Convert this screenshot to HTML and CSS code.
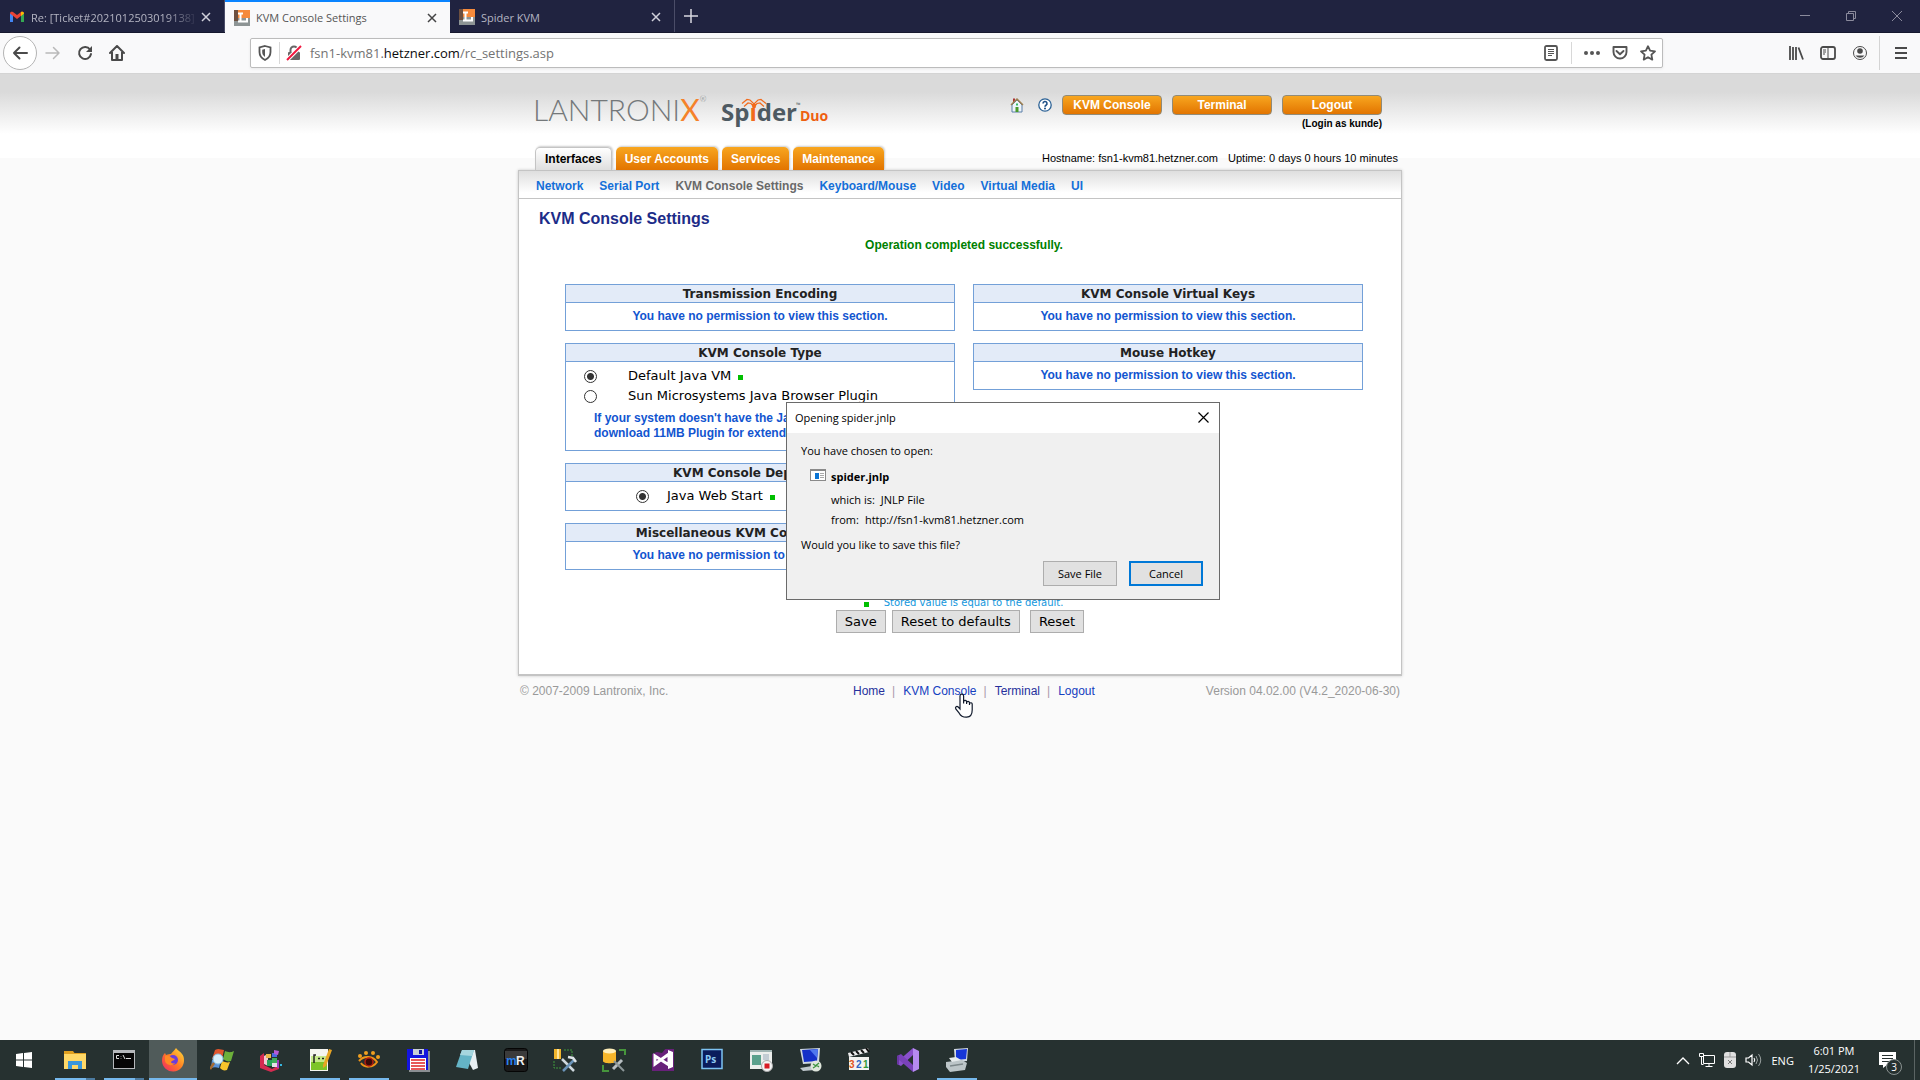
FILE: index.html
```html
<!DOCTYPE html>
<html lang="en">
<head>
<meta charset="utf-8">
<title>KVM Console Settings</title>
<link rel="stylesheet" href="styles.css">
</head>
<body>
<header class="browser">
  <div class="tabstrip">
    <div class="btab">
      <svg class="fav" viewBox="0 0 16 16"><path d="M1 13V4l3 2v7z" fill="#4285f4"/><path d="M12 13V6l3-2v9z" fill="#34a853"/><path d="M1 4.500C1 2.500 3 2.300 4 3l4 3 4-3c1-.7 3-.5 3 1.500L8 10z" fill="#ea4335"/><path d="M12 3c1-.7 3-.5 3 1.500L12 7z" fill="#fbbc04"/></svg>
      <span class="btab-title fade">Re: [Ticket#2021012503019138]</span>
      <button class="icon-btn" aria-label="Close tab"><svg width="10" height="10" viewBox="0 0 10 10"><path d="M1 1l8 8M9 1L1 9" stroke="#d0d0da" stroke-width="1.500"/></svg></button>
    </div>
    <div class="btab active">
      <svg class="fav" viewBox="0 0 16 16"><path d="M0 0h16v8H0z" fill="#f58a3c"/><path d="M0 8h16v8H0z" fill="#8d9494"/><path d="M0 0h4v11H0z" fill="#6d5040"/><path d="M4 3.500h5M6.500 3v8.500M4 11.500h9V8" fill="none" stroke="#fff" stroke-width="2"/></svg>
      <span class="btab-title">KVM Console Settings</span>
      <button class="icon-btn" aria-label="Close tab"><svg width="10" height="10" viewBox="0 0 10 10"><path d="M1 1l8 8M9 1L1 9" stroke="#444" stroke-width="1.500"/></svg></button>
    </div>
    <div class="btab">
      <svg class="fav" viewBox="0 0 16 16"><path d="M0 0h16v8H0z" fill="#f58a3c"/><path d="M0 8h16v8H0z" fill="#8d9494"/><path d="M0 0h4v11H0z" fill="#6d5040"/><path d="M4 3.500h5M6.500 3v8.500M4 11.500h9V8" fill="none" stroke="#fff" stroke-width="2"/></svg>
      <span class="btab-title">Spider KVM</span>
      <button class="icon-btn" aria-label="Close tab"><svg width="10" height="10" viewBox="0 0 10 10"><path d="M1 1l8 8M9 1L1 9" stroke="#d0d0da" stroke-width="1.500"/></svg></button>
    </div>
    <button class="icon-btn new-tab" aria-label="New tab"><svg width="14" height="14" viewBox="0 0 14 14"><path d="M7 0v14M0 7h14" stroke="#d8d8e0" stroke-width="1.500"/></svg></button>
    <div class="win-controls">
      <button class="icon-btn" aria-label="Minimize"><svg width="10" height="10" viewBox="0 0 10 10"><path d="M0 4.500h10" stroke="#8b8b9d"/></svg></button>
      <button class="icon-btn" aria-label="Restore"><svg width="10" height="10" viewBox="0 0 10 10"><path d="M.5 2.500h7v7h-7zM2.500 2.500v-2h7v7h-2" fill="none" stroke="#8b8b9d"/></svg></button>
      <button class="icon-btn" aria-label="Close"><svg width="10" height="10" viewBox="0 0 10 10"><path d="M0 0l10 10M10 0L0 10" stroke="#8b8b9d"/></svg></button>
    </div>
  </div>
  <div class="toolbar">
    <div class="nav-buttons">
      <button class="icon-btn back" aria-label="Back"><svg width="16" height="16" viewBox="0 0 16 16"><path d="M15 8H2M7.500 2.500L2 8l5.500 5.500" fill="none" stroke="#4a4a4a" stroke-width="2" stroke-linecap="round" stroke-linejoin="round"/></svg></button>
      <button class="icon-btn" aria-label="Forward"><svg width="16" height="16" viewBox="0 0 16 16"><path d="M1 8h13M8.500 2.500L14 8l-5.500 5.500" fill="none" stroke="#b9b9b9" stroke-width="1.500" stroke-linecap="round" stroke-linejoin="round"/></svg></button>
      <button class="icon-btn" aria-label="Reload"><svg width="16" height="16" viewBox="0 0 16 16"><path d="M13 4.500A6 6 0 1 0 14 9" fill="none" stroke="#4a4a4a" stroke-width="2" stroke-linecap="round"/><path d="M15 1v6H9z" fill="#4a4a4a"/></svg></button>
      <button class="icon-btn" aria-label="Home"><svg width="16" height="16" viewBox="0 0 16 16"><path d="M1 8l7-7 7 7M3 7v8h10V7" fill="none" stroke="#4a4a4a" stroke-width="2" stroke-linecap="round" stroke-linejoin="round"/><path d="M6.500 9h3v6h-3z" fill="#4a4a4a"/></svg></button>
    </div>
    <div class="urlbar">
      <svg width="14" height="16" viewBox="0 0 14 16"><path d="M7 1l5.500 1.500V7c0 4-2.500 6.500-5.500 8-3-1.500-5.500-4-5.500-8V2.500z" fill="none" stroke="#555" stroke-width="1.800"/><path d="M7 4v8C5 10.500 4.200 9 4.200 7V4.700z" fill="#555"/></svg>
      <span class="url-sep"></span>
      <svg width="16" height="16" viewBox="0 0 16 16"><path d="M4.500 8V5a3.500 3.500 0 0 1 7 0v3" fill="none" stroke="#666" stroke-width="2"/><rect x="2" y="7" width="12" height="8" rx="1" fill="#666"/><path d="M2 14L14 2" stroke="#fff" stroke-width="4"/><path d="M1 15L15 1" stroke="#f0173f" stroke-width="2"/></svg>
      <p class="url">fsn1-kvm81.<b>hetzner.com</b>/rc_settings.asp</p>
      <svg class="reader" width="16" height="16" viewBox="0 0 16 16"><rect x="2" y="1" width="12" height="14" rx="1.500" fill="none" stroke="#555" stroke-width="1.800"/><path d="M5 4.500h6M5 6.500h6M5 8.500h6M5 10.500h4" stroke="#555"/></svg>
      <span class="url-sep wide"></span>
      <div class="url-actions">
      <svg width="16" height="16" viewBox="0 0 16 16" fill="#555"><circle cx="2" cy="8" r="2"/><circle cx="8" cy="8" r="2"/><circle cx="14" cy="8" r="2"/></svg>
      <svg width="16" height="16" viewBox="0 0 16 16"><path d="M1.500 2h13v5a6.500 6.500 0 0 1-13 0zM4.500 6L8 9.300 11.500 6" fill="none" stroke="#555" stroke-width="1.900" stroke-linecap="round" stroke-linejoin="round"/></svg>
      <svg width="16" height="16" viewBox="0 0 16 16"><path d="M8 1.200l2.100 4.500 4.900.6-3.600 3.400.9 4.900L8 12.200l-4.300 2.400.9-4.900L1 6.300l4.900-.6z" fill="none" stroke="#555" stroke-width="1.800" stroke-linejoin="round"/></svg>
      </div>
    </div>
    <div class="tool-right">
      <svg width="16" height="16" viewBox="0 0 16 16"><path d="M2 1v14M5 2v13M8 2v13M10.500 2.500L15 14.500" stroke="#4a4a4a" stroke-width="1.800"/></svg>
      <svg width="16" height="16" viewBox="0 0 16 16"><rect x="1" y="2" width="14" height="12" rx="2" fill="none" stroke="#4a4a4a" stroke-width="1.800"/><path d="M8 2v12M3 5h3M3 7h3M3 9h2" stroke="#4a4a4a"/></svg>
      <svg width="16" height="16" viewBox="0 0 16 16"><circle cx="8" cy="8" r="6.500" fill="none" stroke="#4a4a4a"/><circle cx="8" cy="6" r="2.800" fill="#4a4a4a"/><path d="M3.500 10.500h9A5.500 5.500 0 0 1 3.500 10.500z" fill="#4a4a4a"/></svg>
    </div>
    <button class="icon-btn menu-btn" aria-label="Menu"><svg width="12" height="12" viewBox="0 0 12 12"><path d="M0 1h12M0 6h12M0 11h12" stroke="#4a4a4a" stroke-width="2"/></svg></button>
  </div>
</header>

<main class="page">
  <div class="wrap">
    <div class="banner">
      <div class="brand">
        <span class="lantronix">LANTRONI<b>X</b><sup>®</sup></span>
        <span class="spider"><span class="sp">Sp<i>ı</i>der</span><em>Duo</em><sup>™</sup>
          <svg class="legs" width="26" height="10" viewBox="0 0 26 10"><path d="M1 5.500L6 1.500l3 .5 4 4 4-4 3-.5 5 4M3 8.500l4-3.500 3 .5 3 3 3-3 3-.5 4 3.500" fill="none" stroke="#f26a1b" stroke-width="1.200"/><path d="M10.500 6h5l-1 4h-3z" fill="#f26a1b"/></svg></span>
      </div>
      <div class="account">
        <div class="quick">
          <a href="#" aria-label="Home"><svg width="14" height="16" viewBox="0 0 14 16"><path d="M3 1.500h2v4H3z" fill="#a33"/><path d="M2 8l5-5 5 5v7H2z" fill="#eef4fa" stroke="#5a7ea8"/><path d="M1 8l6-6 6 6" fill="none" stroke="#a08050" stroke-width="1.500"/><path d="M5.500 10h3v5h-3z" fill="#4b9a2c"/><path d="M6 6.500h2v2H6z" fill="#3b6"/></svg></a>
          <a href="#" aria-label="Help"><svg width="14" height="14" viewBox="0 0 14 14"><circle cx="7" cy="7" r="6.200" fill="#fff" stroke="#2c6296" stroke-width="1.300"/><path d="M5 5.500a2 2 0 1 1 3 1.700c-.8.500-1 .8-1 1.600" fill="none" stroke="#1d4f86" stroke-width="1.600"/><circle cx="7" cy="10.500" r="1" fill="#1d4f86"/></svg></a>
          <button class="orange">KVM Console</button>
          <button class="orange">Terminal</button>
          <button class="orange">Logout</button>
        </div>
        <p class="login">(Login as kunde)</p>
      </div>
    </div>
    <div class="tabrow">
      <nav class="tabs">
        <a href="#" class="current">Interfaces</a><a href="#">User Accounts</a><a href="#">Services</a><a href="#">Maintenance</a>
      </nav>
      <p class="host"><span>Hostname: fsn1-kvm81.hetzner.com</span><span>Uptime: 0 days 0 hours 10 minutes</span></p>
    </div>
    <div class="panel">
      <nav class="subnav">
        <a href="#">Network</a><a href="#">Serial Port</a><a href="#" class="current">KVM Console Settings</a><a href="#">Keyboard/Mouse</a><a href="#">Video</a><a href="#">Virtual Media</a><a href="#">UI</a>
      </nav>
      <h1>KVM Console Settings</h1>
      <p class="success">Operation completed successfully.</p>
      <div class="cols">
        <div class="col">
          <section class="box"><h2>Transmission Encoding</h2><p class="denied">You have no permission to view this section.</p></section>
          <section class="box"><h2>KVM Console Type</h2>
            <div class="types">
              <div class="opt"><input type="radio" name="type" id="vm" checked><label for="vm">Default Java VM</label><i class="dot"></i></div>
              <div class="opt"><input type="radio" name="type" id="sun"><label for="sun">Sun Microsystems Java Browser Plugin</label></div>
              <p class="hint">If your system doesn't have the Java plugin,<br>download 11MB Plugin for extended features.</p>
            </div>
          </section>
          <section class="box"><h2>KVM Console Deployment</h2>
            <div class="opt deploy"><input type="radio" name="deploy" id="jws" checked><label for="jws">Java Web Start</label><i class="dot"></i></div>
          </section>
          <section class="box"><h2>Miscellaneous KVM Console Settings</h2><p class="denied">You have no permission to view this section.</p></section>
        </div>
        <div class="col">
          <section class="box"><h2>KVM Console Virtual Keys</h2><p class="denied">You have no permission to view this section.</p></section>
          <section class="box"><h2>Mouse Hotkey</h2><p class="denied">You have no permission to view this section.</p></section>
        </div>
      </div>
      <p class="stored"><i class="dot"></i>Stored value is equal to the default.</p>
      <div class="actions">
        <button class="grey">Save</button>
        <button class="grey">Reset to defaults</button>
        <button class="grey last">Reset</button>
      </div>
    </div>
    <footer class="foot">
      <span>© 2007-2009 Lantronix, Inc.</span>
      <nav><a href="#">Home</a><span>|</span><a href="#" class="hover">KVM Console<svg class="cursor" width="20" height="26" viewBox="0 0 20 26"><path d="M6 16V3a1.800 1.800 0 0 1 3.600 0v7.500V8.500a1.600 1.600 0 0 1 3 0v2.500V9.500a1.500 1.500 0 0 1 2.900 0v2.500V10.800a1.400 1.400 0 0 1 2.700 0V17c0 4-1.500 7-5.500 7.200-4 .2-6-1.200-7.500-4L1.800 16c-1-2 1-3.400 2.400-2z" fill="#fff" stroke="#111a2c" stroke-width="1.200"/></svg></a><span>|</span><a href="#">Terminal</a><span>|</span><a href="#" class="hover">Logout</a></nav>
      <span class="version">Version 04.02.00 (V4.2_2020-06-30)</span>
    </footer>
  </div>

  <div class="dialog" role="dialog" aria-label="Opening spider.jnlp">
    <div class="dlg-title"><span>Opening spider.jnlp</span>
      <button class="icon-btn" aria-label="Close"><svg width="11" height="11" viewBox="0 0 11 11"><path d="M.5.5l10 10M10.500.5l-10 10" stroke="#000" stroke-width="1.200"/></svg></button></div>
    <div class="dlg-body">
      <p>You have chosen to open:</p>
      <div class="file">
        <svg width="16" height="12" viewBox="0 0 16 12"><rect x=".5" y=".5" width="15" height="11" fill="#fff" stroke="#8a8a8a"/><path d="M0 0h16v2H0z" fill="#8a8a8a"/><path d="M5 4h4v6H5z" fill="#0a74d4"/><path d="M10 4.500h4M10 6.500h4M10 8.500h4" stroke="#aaa"/></svg>
        <div>
          <strong>spider.jnlp</strong>
          <p><span>which is:</span><span>JNLP File</span></p>
          <p><span>from:</span><span>http://fsn1-kvm81.hetzner.com</span></p>
        </div>
      </div>
      <p>Would you like to save this file?</p>
      <div class="dlg-actions"><button>Save File</button><button class="default">Cancel</button></div>
    </div>
  </div>
</main>

<footer class="taskbar">
  <div class="apps">
    <button class="app start" aria-label="Start"><svg width="16" height="16" viewBox="0 0 16 16" fill="#fff"><path d="M0 2l7-1v6.500H0zM8 .9L16 0v7.500H8zM0 8.500h7V15l-7-1zM8 8.500h8V16l-8-1z"/></svg></button>
    <button class="app open multi" aria-label="File Explorer"><svg viewBox="0 0 24 24"><path d="M1 3h9l1.500 2H23v16H1z" fill="#e0a020"/><path d="M1 6h22v15H1z" fill="#ffd867"/><path d="M5 21v-8h14v8h-4v-4H9v4z" fill="#3a97dc"/></svg></button>
    <button class="app open multi" aria-label="Command Prompt"><svg viewBox="0 0 24 24"><path d="M1 2h22v19H1z" fill="#b5b8bb"/><path d="M2 5h20v15H2z" fill="#060606"/><path d="M7 7.500H4.500v3H7M9 8v.5M9 10v.5M11 7l2 4M14 10.500h5" stroke="#ddd" fill="none"/></svg></button>
    <button class="app open current" aria-label="Firefox"><svg viewBox="0 0 24 24"><defs><linearGradient id="ff" x1="0" y1="1" x2="1" y2="0"><stop offset="0" stop-color="#f0226c"/><stop offset=".5" stop-color="#ff7a22"/><stop offset="1" stop-color="#ffe43c"/></linearGradient></defs><path d="M15 0c1 2 5 4 6 6 1 1 2 3 2 6a11 11 0 0 1-22 1c0-4 1-6 3-8l1 2c2-1 4-1 5-1 1-2 3-3 5-6z" fill="url(#ff)"/><circle cx="12" cy="12" r="5" fill="#6b3ddb"/><path d="M4 8c3-1 5 0 7 2l3 1c-1 2-3 1-4 3 0 1 2 2 4 1-3 4-9 2-10-2z" fill="#ff8a24"/></svg></button>
    <button class="app" aria-label="Search tool"><svg viewBox="0 0 24 24"><path d="M5 2c4-2 6 0 9 0l-2 9c-4-2-6-1-10 0z" fill="#e0562e"/><path d="M15 3c3 1 5 2 9 0l-3 10c-3 1-5 0-8-2z" fill="#6cb03a"/><path d="M2 12c4-1 6-1 9 0l-2 8c-3-1-5-1-8 0z" fill="#5a93d8"/><path d="M12 13c3 1 5 2 8 1l-3 8c-3 1-5 0-7-2z" fill="#f6c52c"/><circle cx="8" cy="11" r="5" fill="#d8f0fb" stroke="#8cc4e4"/><path d="M4 15l-4 6" stroke="#a66c32" stroke-width="2.500"/></svg></button>
    <button class="app" aria-label="Defragmenter"><svg viewBox="0 0 24 24"><path d="M1 8l4-3v12l8 4 7-4v4l-8 3-11-4z" fill="#d42b50"/><path d="M5 8l4-2v12l-4-2z" fill="#f4c9d2"/><path d="M7 6h5v4H7z" fill="#e8b84a"/><path d="M8 12h5v6H8z" fill="#28a35a"/><path d="M13 10h5v5h-5z" fill="#3fae5c"/><path d="M13 5h5v4h-5z" fill="#4a6ae0"/><path d="M15 2l5 1-1 4-4-1z" fill="#b65ad6"/><path d="M18 12h2v8h-2z" fill="#a03fc0"/><path d="M13 15h5v4h-5z" fill="#e7dfe8"/><path d="M21 16h2v2h-2z" fill="#35b6e0"/></svg></button>
    <button class="app open" aria-label="Notepad++"><svg viewBox="0 0 24 24"><path d="M2 1h18v22H2z" fill="#f5f5f0"/><path d="M3 8h16v14H3z" fill="#c6ea8a"/><path d="M3 14h16v8H3z" fill="#7cc428"/><path d="M6 15V7h2M10 10.500h2M14 10.500h2" stroke="#222" stroke-width="1.500" fill="none"/><path d="M15 17l6-16 3 1-6 16-3 2z" fill="#e8a523"/></svg></button>
    <button class="app open" aria-label="Eye tool"><svg viewBox="0 0 24 24"><path d="M2 13c5-6 14-5 18 1-4 6-13 6-16 1" fill="none" stroke="#ef9418" stroke-width="2"/><circle cx="12" cy="14" r="4" fill="#3b0a08" stroke="#b31c10" stroke-width="1.500"/><circle cx="3" cy="8" r="2" fill="#f0a020"/><circle cx="9" cy="5" r="2" fill="#f0a020"/><circle cx="16" cy="5" r="2" fill="#f0a020"/><circle cx="21" cy="9" r="2" fill="#f0a020"/></svg></button>
    <button class="app" aria-label="Total Commander"><svg viewBox="0 0 24 24"><path d="M3 3h21v21H3z" fill="#8b8f92"/><path d="M1 1h21v21H1z" fill="#1414e0"/><path d="M7 1h11v6H7z" fill="#c9ced6"/><path d="M13 2h3v4h-3z" fill="#1414a0"/><path d="M4 10h16v12H4z" fill="#fff"/><path d="M5 12h14M5 15h14M5 18h14M5 21h14" stroke="#e02020" stroke-width="1.500"/></svg></button>
    <button class="app" aria-label="Notepad"><svg viewBox="0 0 24 24"><path d="M7 2h13l3 18-5 2z" fill="#e8eff2"/><path d="M7 2h12l-6 19-12-2z" fill="#64b4c6"/><path d="M7 2h12l-2 6-12-1z" fill="#a6d6de"/></svg></button>
    <button class="app" aria-label="mRemote"><svg viewBox="0 0 24 24"><rect x=".5" y=".5" width="23" height="23" rx="3" fill="#191919" stroke="#050505"/><path d="M1 3h22v8H1z" fill="#3b3b3b"/><text x="2" y="17" class="mr" fill="#2a80ec">m</text><text x="12" y="17" class="mr" fill="#eee">R</text></svg></button>
    <button class="app" aria-label="Database tools"><svg viewBox="0 0 24 24"><path d="M1 1h7v10H1z" fill="#f1b52c"/><path d="M4 1h2v10H4z" fill="#ffe49a"/><path d="M11 2h8v8M1 13v7h8" fill="none" stroke="#3e9a3c" stroke-dasharray="2 1"/><path d="M9 11l12 12" stroke="#cfd8de" stroke-width="2.500"/><path d="M21 12L10 23" stroke="#6a93b8" stroke-width="2.500"/><path d="M15 9l5 1 3 4" stroke="#dde4e8" stroke-width="2.500" fill="none"/></svg></button>
    <button class="app" aria-label="SQL Server"><svg viewBox="0 0 24 24"><path d="M1 3v10c0 3 13 3 13 0V3z" fill="#f6b62a"/><ellipse cx="7.500" cy="3" rx="6.500" ry="2.500" fill="#ffeeb8"/><path d="M17 2h6v5M1 17v6h6" fill="none" stroke="#46953c" stroke-width="2"/><path d="M11 21l9-9" stroke="#b8bfc2" stroke-width="3"/><path d="M12 13l10 10" stroke="#8c9698" stroke-width="2"/></svg></button>
    <button class="app" aria-label="Visual Studio 2012"><svg viewBox="0 0 24 24"><path d="M1 1h22v22H1z" fill="#68217a"/><path d="M1 0h14l-4 5-5-1-5 2z" fill="#263130"/><path d="M4 8l14 9V6L4 16z" fill="none" stroke="#fff" stroke-width="3"/><path d="M17 2l5 2v15l-5 2z" fill="#fff"/></svg></button>
    <button class="app" aria-label="Photoshop"><svg viewBox="0 0 24 24"><path d="M2 1.500h20v19H2z" fill="#0a1c5c" stroke="#7ec3f2" stroke-width="1.500"/><text x="5" y="15" class="ps" fill="#8ccaf4">Ps</text></svg></button>
    <button class="app" aria-label="Screen recorder"><svg viewBox="0 0 24 24"><path d="M1 2h22v19H1z" fill="#eceeec"/><path d="M1 2h22v2H1z" fill="#9fb3b2"/><path d="M3 7h9v10H3z" fill="#5ba08c"/><path d="M14 7h6M14 9h6M14 11h6" stroke="#9ab"/><circle cx="18" cy="18" r="5.500" fill="#f4f4f4" stroke="#aaa"/><path d="M15.500 15.500h5v5h-5z" fill="#d81a24"/></svg></button>
    <button class="app" aria-label="Remote desktop"><svg viewBox="0 0 24 24"><path d="M2 1l20-1-1 15-16 1z" fill="#cdd6df"/><path d="M4 2l16-1-1 12-13 1z" fill="#1430c8"/><path d="M12 2l8-1-1 9z" fill="#4f78ee"/><path d="M2 20l12-2 3 4-12 1z" fill="#c0c8cc"/><circle cx="18" cy="18" r="5.500" fill="#dfe6dc"/><path d="M15 16l3 2-3 2M21 15l-2.500 2 2.500 2" fill="none" stroke="#3d9440" stroke-width="1.300"/></svg></button>
    <button class="app" aria-label="Media player 321"><svg viewBox="0 0 24 24"><path d="M2 9h20v13H2z" fill="#f3f3f0"/><path d="M1 5l20-5 1 4L2 9z" fill="#eee"/><path d="M4 4l3 3M9 3l3 3M14 2l3 3M19 0l3 4" stroke="#111" stroke-width="2"/><text x="2" y="20" class="mpc" fill="#e0521c">3</text><text x="9" y="20" class="mpc" fill="#2a63c4">2</text><text x="16" y="20" class="mpc" fill="#2f9a3a">1</text></svg></button>
    <button class="app" aria-label="Visual Studio"><svg viewBox="0 0 24 24"><path d="M17 0l6 3v18l-6 3z" fill="#b58af0"/><path d="M17 0v7L5 18l-4-2v-2z" fill="#8a50cc"/><path d="M17 24v-7L5 6 1 8v2z" fill="#7a42ba"/><path d="M1 8v8l2 1V7z" fill="#6a36a4"/></svg></button>
    <button class="app open" aria-label="Terminal session"><svg viewBox="0 0 24 24"><path d="M9 1l14-1-1 13-12 1z" fill="#d3dae2"/><path d="M11 2l11-1-1 10-10 1z" fill="#1636d8"/><path d="M1 14l16-2 5 3-2 7-15 2-4-5z" fill="#bcc5c8"/><path d="M4 10l7-1 5 3-9 2z" fill="#e6ebec"/><path d="M5 18l13-2" stroke="#7d888b" stroke-width="1.500"/></svg></button>
  </div>
  <div class="tray">
    <svg width="14" height="9" viewBox="0 0 14 9"><path d="M1 8l6-6 6 6" fill="none" stroke="#fff" stroke-width="1.300"/></svg>
    <svg width="16" height="14" viewBox="0 0 16 14"><path d="M4.500 2.500h11v8h-11zM10 10.500v3M6.500 13.500h7M.5.500h4v3h-4zM2.500 3.500v8h2" fill="none" stroke="#fff"/></svg>
    <svg width="12" height="16" viewBox="0 0 12 16"><rect width="12" height="16" rx="3" fill="#e0e0e0"/><path d="M0 5h12M6 0v5" stroke="#999"/><path d="M4 8l4 4M8 8l-4 4" stroke="#777"/></svg>
    <svg width="17" height="14" viewBox="0 0 17 14"><path d="M1 5h2.500L7 2v10L3.500 9H1zM9 5q1.500 2 0 4" fill="none" stroke="#fff" stroke-width="1.200"/><path d="M11 3q3 4 0 8M13.500 1q4.500 6 0 12" fill="none" stroke="#99a09f"/></svg>
    <span>ENG</span>
    <p class="clock">6:01 PM<br>1/25/2021</p>
    <div class="notify"><svg width="17" height="16" viewBox="0 0 17 16"><path d="M0 0h17v13H8l-4 3v-3H0z" fill="#fff"/><path d="M3 3.500h11M3 6.500h11M3 9.500h7" stroke="#263130"/></svg><span class="badge">3</span></div>
  </div>
</footer>
</body>
</html>
```
FILE: styles.css
```css
* { box-sizing: border-box; }
body { margin: 0; min-height: 100vh; display: flex; flex-direction: column; background: #fafafa; color: #000; font: 12px/15px "Liberation Sans", Arial, sans-serif; }
p, h1, h2 { margin: 0; }
a { color: inherit; text-decoration: none; }
button { font: inherit; color: inherit; padding: 0; }
svg { display: block; flex: none; }
.icon-btn { display: flex; align-items: center; justify-content: center; border: 0; background: none; }

/* browser chrome */
.browser, .dialog, .taskbar { font-family: "Open Sans", "Noto Sans", sans-serif; }
.tabstrip { display: flex; height: 33px; background: #202340; border-bottom: 1px solid #16182e; }
.btab { display: flex; align-items: center; width: 225px; padding: 2px 13px 0 9px; gap: 6px; border-right: 1px solid #4b4d68; color: #b4b5c2; font-size: 11px; }
.btab.active { background: #f9f9fa; color: #555; border-top: 2px solid #0a84ff; border-right: 0; padding-top: 0; margin-bottom: -1px; }
.fav { width: 16px; height: 16px; }
.btab-title { flex: 1; overflow: hidden; white-space: nowrap; }
.fade { margin-right: -4px; -webkit-mask-image: linear-gradient(90deg, #000 80%, transparent); mask-image: linear-gradient(90deg, #000 80%, transparent); }
.new-tab { width: 32px; }
.win-controls { display: flex; margin-left: auto; }
.win-controls button { width: 46px; }
.toolbar { display: flex; align-items: center; height: 41px; padding: 0 13px 0 3px; background: #f9f9fa; border-bottom: 1px solid #d4d4d4; }
.nav-buttons { display: flex; width: 247px; }
.nav-buttons button { width: 32px; height: 34px; }
.nav-buttons .back { width: 34px; border: 1px solid #b4b4b4; border-radius: 50%; background: #fff; }
.urlbar { flex: 1; display: flex; align-items: center; height: 30px; padding: 0 6px 0 7px; background: #fff; border: 1px solid #bcbcbc; border-radius: 2px; box-shadow: 0 1px 3px #0001; }
.url-sep { width: 1px; height: 22px; background: #d8d8d8; margin: 0 6px 0 7px; }
.url-sep.wide { margin: 0 12px; }
.url { flex: 1; padding: 1px 0 0 8px; font-size: 13px; color: #737373; }
.url b { font-weight: 400; color: #0c0c0d; }
.url-actions { display: flex; gap: 12px; }
.tool-right { display: flex; gap: 16px; margin-left: 125px; padding-right: 11px; }
.menu-btn { height: 34px; padding-left: 15px; border-left: 1px solid #d4d4d4; }

/* page */
.page { position: relative; flex: 1; background: linear-gradient(#dadada, #dadada 18px, #fff 60px, #fff 84px, #fafafa 84px); }
.wrap { width: 884px; margin: 0 auto; }
.banner { display: flex; justify-content: space-between; height: 72px; padding: 21px 20px 0 15px; }
.brand { display: flex; align-items: flex-start; }
.lantronix { display: flex; width: 188px; font: 300 30px/28px Lato, sans-serif; color: #74787a; }
.lantronix b { font-weight: 400; color: #f5822a; }
.lantronix sup { font-size: 8px; line-height: 8px; }
.spider { position: relative; display: flex; align-items: baseline; font: 700 24px/34px "Open Sans", sans-serif; color: #4e5a62; }
.spider i { font-style: normal; color: #f26a1b; }
.spider sup { position: absolute; left: 75px; top: 6px; font-size: 6px; line-height: 8px; }
.spider em { margin-left: 3px; font-size: 14px; font-style: normal; color: #ee5f10; }
.legs { position: absolute; left: 20px; top: 3px; }
.account { display: flex; flex-direction: column; align-items: flex-end; }
.quick { display: flex; align-items: center; gap: 10px; }
.quick a:first-child { margin-right: 4px; }
.orange { width: 100px; height: 20px; border: 1px solid #918b78; border-radius: 4px; background: linear-gradient(#f8a61f, #e27400); color: #fff; font-weight: 700; line-height: 16px; }
.login { font-size: 10px; font-weight: 700; line-height: 18px; }
.tabrow { display: flex; justify-content: space-between; align-items: flex-end; height: 24px; padding: 0 4px 0 17px; }
.tabs { display: flex; gap: 4px; font-weight: 700; color: #fff; }
.tabs a { height: 23px; padding: 5px 9px 0; border-radius: 5px 5px 0 0; background: linear-gradient(#f8a61f, #e27400); box-shadow: 1px -1px 2px #0003; }
.tabs .current { color: #000; background: linear-gradient(#fff, #dedede); border: 1px solid #c4c4c4; border-bottom: 0; padding-top: 4px; }
.host { display: flex; gap: 10px; font-size: 11px; padding-bottom: 4px; }
.panel { height: 506px; background: #fff; border: 1px solid #c4c4c4; border-width: 1px 1px 2px; box-shadow: 0 0 3px #0003; }
.subnav { display: flex; gap: 16px; height: 28px; padding: 8px 17px 0; background: linear-gradient(#dedede, #fff 80%); border-bottom: 1px solid #c4c4c4; font-weight: 700; color: #146fd8; }
.subnav .current { color: #696969; }
h1 { padding: 11px 20px 0; font-size: 16px; line-height: 18px; color: #1c2c88; }
.success { padding: 10px 0 31px 8px; text-align: center; font-weight: 700; color: #008000; }
.cols { display: grid; grid-template-columns: 1fr 1fr; gap: 18px; padding: 0 38px 0 46px; }
.col { display: flex; flex-direction: column; gap: 12px; }
.box { border: 1px solid #73a0d8; }
.box h2 { height: 18px; background: #e3ebf8; border-bottom: 1px solid #73a0d8; text-align: center; font: 700 12px/18px "DejaVu Sans", Verdana, sans-serif; color: #222; }
.denied, .hint { font-weight: 700; color: #1255d0; }
.denied { padding: 6px; text-align: center; }
.types { padding: 4px 0 9px 18px; }
.opt { display: flex; align-items: center; height: 20px; font: 13px/20px "DejaVu Sans", Verdana, sans-serif; }
.opt input { appearance: none; width: 13px; height: 13px; margin: 0 31px 0 0; border: 1px solid #333; border-radius: 50%; background: #fff; }
.opt input:checked { background: radial-gradient(#333 0 3px, #fff 4px); }
.dot { width: 5px; height: 5px; margin: 2px 0 0 7px; background: #00bf00; }
.hint { padding: 5px 0 0 10px; white-space: nowrap; }
.deploy { height: 28px; padding-left: 70px; }
.deploy input { margin-right: 18px; }
.stored { display: flex; justify-content: center; align-items: center; gap: 15px; padding-top: 26px; font: 10px/14px "DejaVu Sans", Verdana, sans-serif; color: #1296dc; }
.actions { display: flex; justify-content: center; gap: 6px; }
.grey { height: 23px; padding: 0 8px; background: #e1e1e1; border: 1px solid #adadad; font: 13px/20px "DejaVu Sans", Verdana, sans-serif; }
.grey.last { margin-left: 4px; }
.foot { display: grid; grid-template-columns: 333px auto 1fr; padding: 8px 2px 0 2px; color: #999; }
.foot nav { display: flex; color: #26309c; }
.foot nav span { padding: 0 8px 0 7px; color: #a9a; }
.foot .hover { position: relative; color: #1440c0; }
.version { text-align: right; }
.cursor { position: absolute; left: 51px; top: 9px; }

/* download dialog */
.dialog { position: absolute; left: calc(50% - 174px); top: 328px; width: 434px; background: #f0f0f0; border: 1px solid #6a6a6a; font-size: 11px; }
.dlg-title { display: flex; justify-content: space-between; height: 30px; padding: 0 10px 2px 8px; background: #fff; line-height: 30px; }
.dlg-body { padding: 10px 16px 13px 14px; }
.file { display: flex; gap: 5px; padding: 11px 0 5px 9px; }
.file strong { display: block; margin-bottom: 8px; }
.file p { display: flex; gap: 6px; height: 20px; }
.dlg-actions { display: flex; justify-content: flex-end; gap: 12px; padding-top: 9px; }
.dlg-actions button { width: 74px; height: 25px; background: #e1e1e1; border: 1px solid #adadad; }
.dlg-actions .default { border: 2px solid #0078d7; }

/* taskbar */
.taskbar { display: flex; justify-content: space-between; height: 40px; background: #263130; color: #fff; font-size: 11px; }
.apps { display: flex; gap: 1px; }
.app { display: flex; align-items: center; justify-content: center; width: 48px; border: 0; background: none; position: relative; }
.app svg { width: 24px; height: 24px; }
.app.start { width: 50px; padding-right: 2px; }
.app.start svg { width: 16px; height: 16px; }
.app.current { background: #505b5a; }
.app.open::after { content: ""; position: absolute; left: 4px; right: 4px; bottom: 0; height: 2px; background: #76b9ed; }
.app.current::after { left: 0; right: 0; }
.app.multi::after { background: linear-gradient(90deg, #76b9ed 31px, #4c7ba0 31px); }
.mr { font: 700 12px "Liberation Sans", sans-serif; }
.ps { font: 700 10px "Open Sans", sans-serif; }
.mpc { font: 700 10px "Liberation Sans", sans-serif; }
.tray { display: flex; align-items: center; gap: 9px; padding-right: 16px; box-shadow: inset -5px 0 #263130, inset -6px 0 #5b6463; }
.clock { margin-left: 5px; text-align: center; line-height: 18px; }
.notify { position: relative; margin: 0 0 0 10px; padding-right: 8px; }
.badge { position: absolute; left: 7px; top: 7px; width: 16px; height: 16px; border: 1px solid #8a9291; border-radius: 50%; background: #263130; font-size: 10px; line-height: 14px; text-align: center; }
```
